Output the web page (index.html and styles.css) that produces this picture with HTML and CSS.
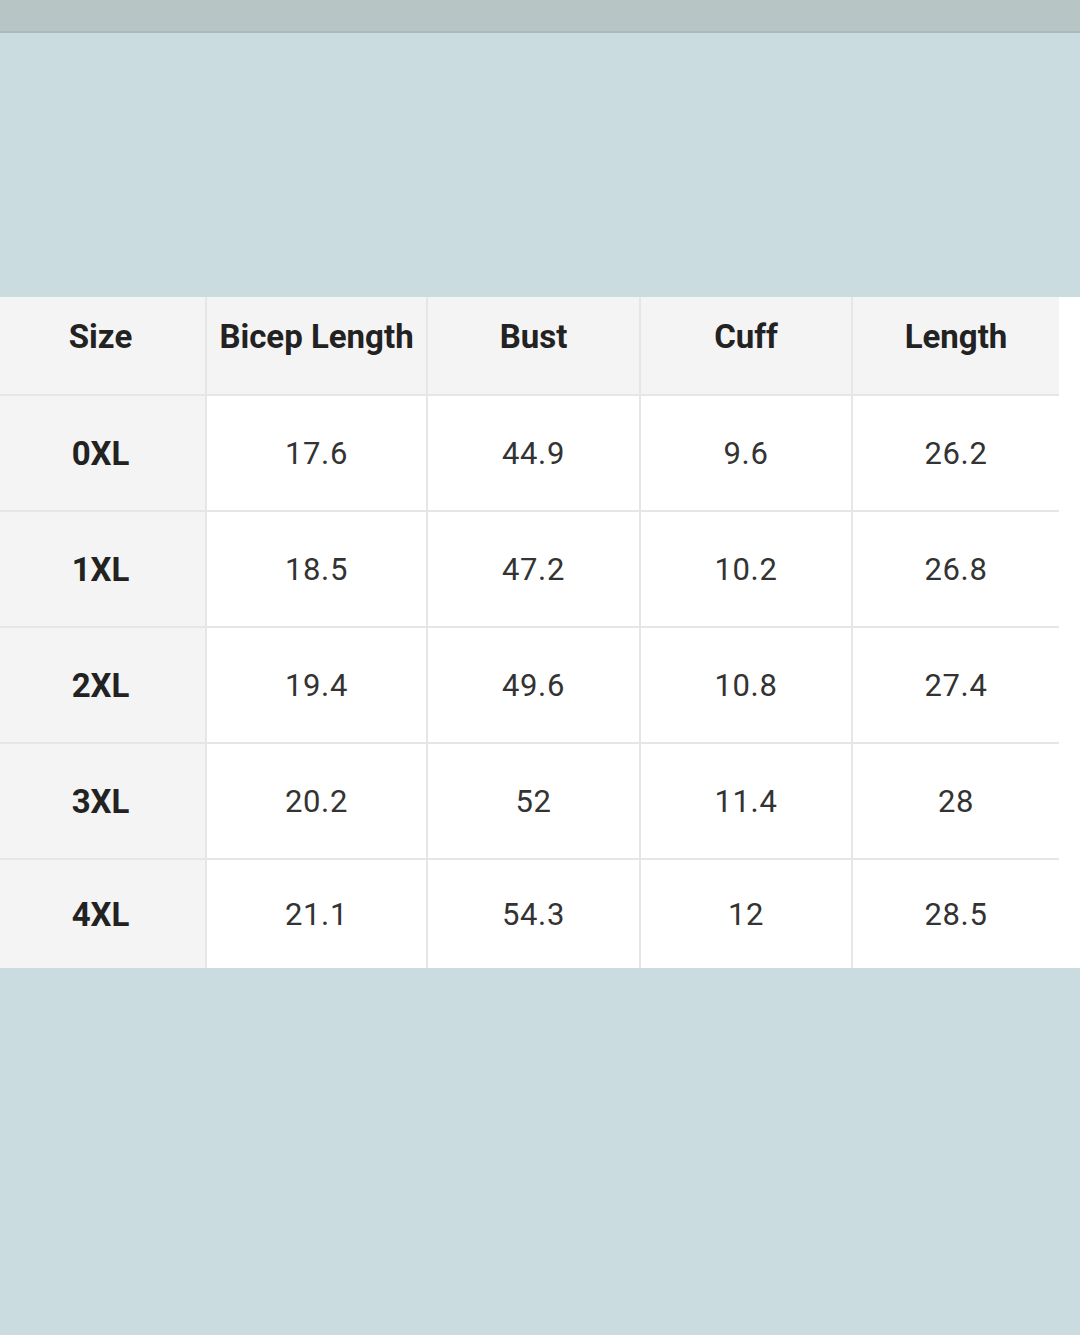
FILE: index.html
```html
<!DOCTYPE html>
<html>
<head>
<meta charset="utf-8">
<link rel="stylesheet" href="styles.css">
</head>
<body>
<div class="topbar"></div>
<div class="spacer"></div>
<div class="sheet">
  <div class="grid">
    <div class="cell head first-col">Size</div>
    <div class="cell head">Bicep Length</div>
    <div class="cell head">Bust</div>
    <div class="cell head">Cuff</div>
    <div class="cell head last-col">Length</div>

    <div class="cell size first-col">0XL</div>
    <div class="cell">17.6</div>
    <div class="cell">44.9</div>
    <div class="cell">9.6</div>
    <div class="cell last-col">26.2</div>

    <div class="cell size first-col">1XL</div>
    <div class="cell">18.5</div>
    <div class="cell">47.2</div>
    <div class="cell">10.2</div>
    <div class="cell last-col">26.8</div>

    <div class="cell size first-col">2XL</div>
    <div class="cell">19.4</div>
    <div class="cell">49.6</div>
    <div class="cell">10.8</div>
    <div class="cell last-col">27.4</div>

    <div class="cell size first-col">3XL</div>
    <div class="cell">20.2</div>
    <div class="cell">52</div>
    <div class="cell">11.4</div>
    <div class="cell last-col">28</div>

    <div class="cell size first-col last-row">4XL</div>
    <div class="cell last-row">21.1</div>
    <div class="cell last-row">54.3</div>
    <div class="cell last-row">12</div>
    <div class="cell last-row last-col">28.5</div>
  </div>
</div>
</body>
</html>
```

FILE: styles.css
```css
html, body {
  margin: 0;
  padding: 0;
}
body {
  background: #cbdce1;
  width: 1080px;
  height: 1335px;
  overflow: hidden;
  font-family: Roboto, "Liberation Sans", sans-serif;
}
.topbar {
  height: 31px;
  background: #b7c5c5;
  border-bottom: 2px solid #aab9be;
}
.spacer {
  height: 264px;
}
.sheet {
  background: #ffffff;
  width: 1080px;
}
.grid {
  width: 1059px;
  display: grid;
  grid-template-columns: 207px 221px 213px 212px 206px;
  grid-template-rows: 99px 116px 116px 116px 116px 108px;
}
.cell {
  display: flex;
  align-items: center;
  justify-content: center;
  border-right: 2px solid #e6e6e6;
  border-bottom: 2px solid #e6e6e6;
  font-size: 31px;
  color: #333333;
  letter-spacing: 0.7px;
  box-sizing: border-box;
}
.head {
  background: #f4f4f4;
  font-weight: 700;
  font-size: 33px;
  color: #222222;
  padding-bottom: 18px;
  letter-spacing: 0;
}
.size {
  background: #f4f4f4;
  font-weight: 700;
  font-size: 33px;
  color: #222222;
  letter-spacing: 0;
}
.first-col {
  padding-right: 4px;
}
.last-col {
  border-right: none;
}
.last-row {
  border-bottom: none;
}
```
